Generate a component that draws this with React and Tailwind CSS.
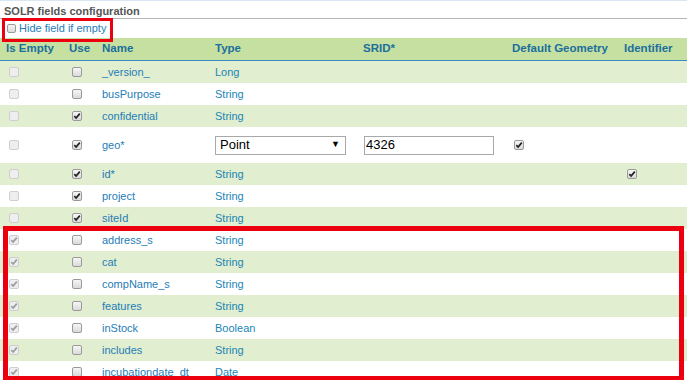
import React from 'react';

const cols = 'grid grid-cols-[63px_33px_113px_148px_149px_112px_69px] items-center';

const rows = [
  { name: '_version_', type: 'Long', empty: false, use: false },
  { name: 'busPurpose', type: 'String', empty: false, use: false },
  { name: 'confidential', type: 'String', empty: false, use: true },
  { name: 'geo*', geo: true, empty: false, use: true },
  { name: 'id*', type: 'String', empty: false, use: true, ident: true },
  { name: 'project', type: 'String', empty: false, use: true },
  { name: 'siteId', type: 'String', empty: false, use: true },
  { name: 'address_s', type: 'String', empty: true, use: false },
  { name: 'cat', type: 'String', empty: true, use: false },
  { name: 'compName_s', type: 'String', empty: true, use: false },
  { name: 'features', type: 'String', empty: true, use: false },
  { name: 'inStock', type: 'Boolean', empty: true, use: false },
  { name: 'includes', type: 'String', empty: true, use: false },
  { name: 'incubationdate_dt', type: 'Date', empty: true, use: false },
];

const Check = ({ checked, disabled, small }) => (
  <div
    className={
      (small ? 'w-[9px] h-[9px] ' : 'w-[10px] h-[10px] ') +
      'rounded-[2px] border flex items-center justify-center ' +
      (disabled
        ? 'border-[#cfcfcf] bg-[#eeeeee]'
        : 'border-[#9a9a9a] bg-gradient-to-b from-[#f6f6f6] to-[#dadada]')
    }
  >
    {checked && (
      <svg width="8" height="8" viewBox="0 0 8 8">
        <path
          d="M1.3 4.2 L3.1 6 L6.8 1.6"
          fill="none"
          stroke={disabled ? '#9c9c9c' : '#222'}
          strokeWidth="1.7"
        />
      </svg>
    )}
  </div>
);

const App = () => {
  return (
    <div className="relative w-[687px] h-[380px] overflow-hidden bg-white border-t border-[#d9e6f4] font-['Liberation_Sans',Arial,sans-serif] text-[11px]">
      <div className="h-[18px] border-b border-[#b4b4b4] pl-[4px] pt-[4px] text-[11px] font-bold text-[#555] leading-[12px]">
        SOLR fields configuration
      </div>

      <div className="h-[19px] flex items-center pl-[7px] gap-[3px]">
        <Check small />
        <span className="text-[#1f7db8] text-[11px]">Hide field if empty</span>
      </div>

      {/* table header */}
      <div className={cols + ' h-[23px] bg-[#c6e0a1] border-b border-[#3b8cc0] font-bold text-[11.5px] text-[#1a6f9c]'}>
        <div className="pl-[6px]">Is Empty</div>
        <div className="pl-[6px]">Use</div>
        <div className="pl-[6px]">Name</div>
        <div className="pl-[6px]">Type</div>
        <div className="pl-[6px]">SRID*</div>
        <div className="pl-[6px]">Default Geometry</div>
        <div className="pl-[6px]">Identifier</div>
      </div>

      {rows.map((r, i) => (
        <div
          key={r.name}
          className={cols + (r.geo ? ' h-[36px]' : ' h-[22px]') + (i % 2 === 0 ? ' bg-[#e1eecf]' : ' bg-white')}
        >
          <div className="pl-[9px]"><Check checked={r.empty} disabled /></div>
          <div className="pl-[9px]"><Check checked={r.use} /></div>
          <div className="pl-[6px] pt-[1px] text-[#1f7db8]">{r.name}</div>
          {r.geo ? (
            <>
              <div className="pl-[6px]">
                <div className="w-[131px] h-[19px] border border-[#a9a9a9] bg-white flex items-center justify-between pl-[4px] pr-[5px] text-[13px] text-black">
                  <span>Point</span>
                  <span className="text-[9px]">▼</span>
                </div>
              </div>
              <div className="pl-[7px]">
                <div className="w-[130px] h-[19px] border border-[#a9a9a9] bg-white flex items-center pl-[1px] text-[13px] text-black">
                  4326
                </div>
              </div>
              <div className="pl-[8px]"><Check checked /></div>
              <div />
            </>
          ) : (
            <>
              <div className="pl-[6px] pt-[1px] text-[#1a86b6]">{r.type}</div>
              <div />
              <div />
              <div className="pl-[9px]">{r.ident && <Check checked />}</div>
            </>
          )}
        </div>
      ))}

      {/* red highlight boxes */}
      <div className="absolute left-[2px] top-[17px] w-[111px] h-[24px] border-[3px] border-[#ec0010]" />
      <div className="absolute left-[3px] top-[225px] w-[681px] h-[155px] border-[5px] border-[#ec0010]" />
    </div>
  );
};

export default App;
